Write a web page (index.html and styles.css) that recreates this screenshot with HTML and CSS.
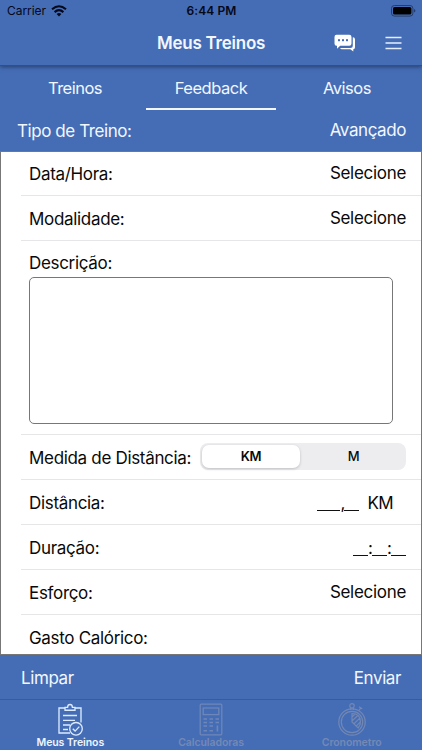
FILE: index.html
```html
<!DOCTYPE html>
<html lang="pt-BR">
<head>
<meta charset="utf-8">
<title>Meus Treinos</title>
<link rel="stylesheet" href="styles.css">
</head>
<body>
<div class="app">
  <header class="top">
    <div class="status">
      <div class="carrier"><span>Carrier</span>
        <svg class="wifi" width="16" height="12" viewBox="0 0 16 12"><g fill="none" stroke="#04081a" stroke-width="2.1"><path d="M1 4.3Q8-1.8 15 4.3"/><path d="M3.6 7.1Q8 3.3 12.4 7.1"/></g><path d="M5.6 8.9Q8 7 10.4 8.9L8 11.4Z" fill="#04081a"/></svg>
      </div>
      <span class="clock">6:44 PM</span>
      <svg class="battery" width="25" height="12" viewBox="0 0 25 12"><rect x=".5" y=".5" width="21.4" height="10.6" rx="2.9" fill="none" stroke="#263c69"/><rect x="2" y="2" width="18.4" height="7.6" rx="1.6"/><path d="M23 4q1.4.5 1.4 1.8T23 7.6Z" fill="#263c69"/></svg>
    </div>
    <div class="nav">
      <h1>Meus Treinos</h1>
      <svg class="chat" width="22" height="18" viewBox="0 0 22 18"><path fill="#fff" d="M2.5.8h12.8q2.2 0 2.2 2.2v6.6q0 2.2-2.2 2.2H6.2L3 14.7v-2.9H2.5Q.5 11.8.5 9.6V3Q.5.8 2.5.8Z"/><path fill="#fff" d="M18.8 3.2q2.2 0 2.2 2.2v7.9q0 2-1.7 2v2.1l-3-2.1H8q-1.4 0-1.9-1.4h10.2q2.5 0 2.5-2.5Z"/><g fill="#456db5"><rect x="4" y="5.2" width="2" height="2"/><rect x="8" y="5.2" width="2" height="2"/><rect x="12" y="5.2" width="2" height="2"/></g></svg>
      <svg class="menu" width="17" height="14" viewBox="0 0 17 14"><path d="M.5 1.5h16M.5 7h16M.5 12.5h16" stroke="#e4efff" stroke-width="1.3"/></svg>
    </div>
  </header>
  <nav class="tabs">
    <a class="tab"><span>Treinos</span></a>
    <a class="tab active"><span>Feedback</span></a>
    <a class="tab"><span>Avisos</span></a>
  </nav>
  <div class="type"><span class="type-label">Tipo de Treino:</span><span class="type-value">Avançado</span></div>
  <main class="form">
    <div class="row first"><label>Data/Hora:</label><span class="value">Selecione</span></div>
    <div class="row"><label>Modalidade:</label><span class="value">Selecione</span></div>
    <div class="row description"><label>Descrição:</label><div class="textarea"></div></div>
    <div class="row"><label>Medida de Distância:</label>
      <div class="segment"><span class="on">KM</span><span>M</span></div></div>
    <div class="row"><label>Distância:</label><span class="value distance"><i class="w3"></i><em>,</em><i></i><b>KM</b></span></div>
    <div class="row"><label>Duração:</label><span class="value duration"><i></i><em>:</em><i></i><em>:</em><i></i></span></div>
    <div class="row"><label>Esforço:</label><span class="value">Selecione</span></div>
    <div class="row last"><label>Gasto Calórico:</label></div>
  </main>
  <div class="actions"><span class="clear">Limpar</span><span class="send">Enviar</span></div>
  <footer class="bottom">
    <div class="item current">
      <svg width="34" height="34" viewBox="0 0 34 34" fill="none" stroke="#dcebff" stroke-width="1.35"><path d="M12 6H6v25h11M22 6h6v14.5M12 8.2V5.3h2.6Q14.7 2.5 17 2.5t2.4 2.8H22v2.9ZM10 13.5h14M10 18.3h12M10 23h7M10 27.5h5"/><circle cx="23" cy="26.8" r="6.3"/><path d="m19.8 26.8 2.3 2.3 4.2-4.5"/></svg>
      <span>Meus Treinos</span>
    </div>
    <div class="item">
      <svg width="34" height="34" viewBox="0 0 34 34" fill="none" stroke="#6f87b8" stroke-width="1.25"><rect x="6.2" y="2.2" width="21.6" height="30.6" rx="1"/><rect x="9.2" y="6" width="15.6" height="6.6"/><path d="M9.5 17H13M15.5 17H19M21.5 17H25M9.5 20.5H13M15.5 20.5H19M9.5 24H13M15.5 24H19M9.5 28.7H13M15.5 28.7H19M21.5 20.5H25M23.4 23.5v6" stroke-width="1.6"/></svg>
      <span>Calculadoras</span>
    </div>
    <div class="item">
      <svg width="34" height="34" viewBox="0 0 34 34" fill="none" stroke="#7287b4" stroke-width="1.2"><circle cx="17" cy="20" r="13.2"/><circle cx="17" cy="20" r="10.7"/><circle cx="17" cy="3.8" r="2.2"/><path d="M15.7 6v2M18.3 6v2M24 4.8l3.3 2M25.7 5.8l-1.5 2.6M17 20V11.5q8.5 0 8.5 8.5 0 3.4-2.4 6ZM17 15l3.5-3.4M17 19l6-5.8M19 21.7l6-5.8M21 24.3l4.3-4.4"/></svg>
      <span>Cronometro</span>
    </div>
  </footer>
</div>
</body>
</html>
```
FILE: styles.css
```css
* { box-sizing: border-box; }
body { margin: 0; font-family: Inter, "Liberation Sans", sans-serif; background: #456db5; }
.app { width: 422px; height: 750px; display: flex; flex-direction: column; overflow: hidden; color: #f2f7ff; font-size: 17px; }
svg { display: block; }
.top { height: 66px; flex: none; border-bottom: 1px solid #315087; box-shadow: 0 1px 4px #263f70; background: #456db5; z-index: 1; }
.status { height: 21px; display: grid; grid-template-columns: 1fr auto 1fr; align-items: center; padding: 0 6px 0 7px; color: #04081a; font-size: 12px; }
.carrier { display: flex; align-items: center; gap: 5px; letter-spacing: -.05px; }
.clock { font-weight: 600; letter-spacing: .1px; }
.battery { justify-self: end; }
.nav { height: 44px; display: grid; grid-template-columns: 334px 51px 37px; align-items: center; }
h1 { margin: 0; padding-left: 157px; font-size: 17px; font-weight: 600; letter-spacing: -.24px; white-space: nowrap; }
.tabs { height: 45px; flex: none; display: grid; grid-template-columns: repeat(3, 130px); column-gap: 6px; padding-left: 10px; font-size: 16.5px; letter-spacing: -.5px; }
.tab { display: flex; justify-content: center; height: 44px; padding-top: 12px; line-height: 20px; border-bottom: 2px solid transparent; }
.active { border-color: #f2f7ff; }
.type { height: 40px; flex: none; display: flex; justify-content: space-between; padding: 10px 16px 0 17px; line-height: 20px; letter-spacing: -.42px; }
.type-value { margin-top: -1px; }
.form { height: 504px; flex: none; border: 1px solid #777; background: #fff; color: #090909; padding-left: 20px; overflow: hidden; }
.row { height: 45px; display: flex; align-items: center; justify-content: space-between; border-bottom: 1px solid #e6e6e8; padding: 1px 15px 0 8px; }
.row.first { height: 44px; padding-top: 0; }
.row label { white-space: nowrap; letter-spacing: -.32px; }
.value { margin-top: -2px; letter-spacing: -.3px; }
.description { height: 194px; display: block; padding: 12px 28px 0 8px; }
.description label { display: block; height: 24px; line-height: 20px; }
.textarea { height: 147px; border: 1px solid #777; border-radius: 5px; }
.segment { width: 206px; height: 27px; margin-top: -2px; padding: 2px; border-radius: 8px; background: #ededf0; display: grid; grid-template-columns: 98px 1fr; font-size: 13px; letter-spacing: -.2px; text-align: center; line-height: 23px; }
.segment span { font-weight: 500; }
.segment span:last-child { padding-left: 3px; }
.segment .on { font-weight: 600; background: #fff; border-radius: 7px; box-shadow: 0 1px 3px #0003; }
.distance, .duration { display: flex; margin-top: 0; line-height: 20px; }
.distance { padding-right: 13px; }
.value i { width: 15px; border-bottom: 1px solid #111; height: 18px; }
.value .w3 { width: 23px; }
.value em { width: 4px; font-style: normal; text-align: center; letter-spacing: 0; }
.value b { font-weight: 400; margin-left: 8px; letter-spacing: -.6px; }
.last { border-bottom: 0; }
.actions { height: 44px; flex: none; padding: 1px 21px 0 21px; display: flex; align-items: center; justify-content: space-between; letter-spacing: -.4px; }
.bottom { height: 51px; flex: none; border-top: 1px solid #365b9e; display: grid; grid-template-columns: repeat(3, 1fr); color: #7489b5; font-size: 10.5px; font-weight: 600; }
.item { display: flex; flex-direction: column; align-items: center; padding-top: 2px; line-height: 13px; letter-spacing: -.08px; }
.current { color: #eef5ff; }
```
